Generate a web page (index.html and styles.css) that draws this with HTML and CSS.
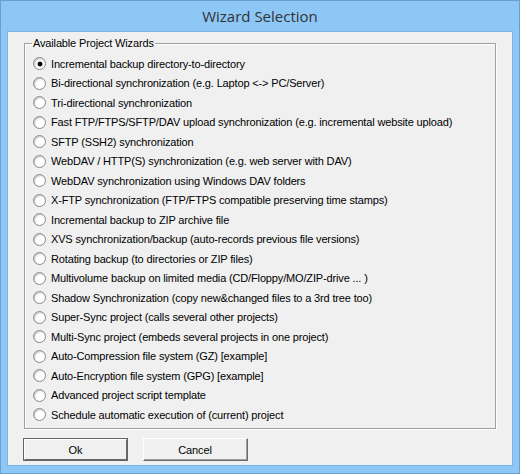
FILE: index.html
```html
<!DOCTYPE html>
<html>
<head>
<meta charset="utf-8">
<link rel="stylesheet" href="styles.css">
</head>
<body>
<div class="window">
  <div class="titlebar">Wizard Selection</div>
  <div class="client">
    <fieldset class="group">
      <legend class="legend">Available Project Wizards</legend>
      <div class="list">
        <label class="row"><span class="radio checked"></span>Incremental backup directory-to-directory</label>
        <label class="row"><span class="radio"></span>Bi-directional synchronization (e.g. Laptop &lt;-&gt; PC/Server)</label>
        <label class="row"><span class="radio"></span>Tri-directional synchronization</label>
        <label class="row"><span class="radio"></span>Fast FTP/FTPS/SFTP/DAV upload synchronization (e.g. incremental website upload)</label>
        <label class="row"><span class="radio"></span>SFTP (SSH2) synchronization</label>
        <label class="row"><span class="radio"></span>WebDAV / HTTP(S) synchronization (e.g. web server with DAV)</label>
        <label class="row"><span class="radio"></span>WebDAV synchronization using Windows DAV folders</label>
        <label class="row"><span class="radio"></span>X-FTP synchronization (FTP/FTPS compatible preserving time stamps)</label>
        <label class="row"><span class="radio"></span>Incremental backup to ZIP archive file</label>
        <label class="row"><span class="radio"></span>XVS synchronization/backup (auto-records previous file versions)</label>
        <label class="row"><span class="radio"></span>Rotating backup (to directories or ZIP files)</label>
        <label class="row"><span class="radio"></span>Multivolume backup on limited media (CD/Floppy/MO/ZIP-drive ... )</label>
        <label class="row"><span class="radio"></span>Shadow Synchronization (copy new&amp;changed files to a 3rd tree too)</label>
        <label class="row"><span class="radio"></span>Super-Sync project (calls several other projects)</label>
        <label class="row"><span class="radio"></span>Multi-Sync project (embeds several projects in one project)</label>
        <label class="row"><span class="radio"></span>Auto-Compression file system (GZ) [example]</label>
        <label class="row"><span class="radio"></span>Auto-Encryption file system (GPG) [example]</label>
        <label class="row"><span class="radio"></span>Advanced project script template</label>
        <label class="row"><span class="radio"></span>Schedule automatic execution of (current) project</label>
      </div>
    </fieldset>
    <div class="buttons">
      <button class="btn default"><span class="btn-inner">Ok</span></button>
      <button class="btn"><span class="btn-inner">Cancel</span></button>
    </div>
  </div>
</div>
</body>
</html>
```

FILE: styles.css
```css
html, body {
  margin: 0;
  padding: 0;
  background: #f0f0f0;
}

.window {
  width: 520px;
  height: 474px;
  box-sizing: border-box;
  border: 1px solid #6b9fd1;
  background: #8dc7f6;
  display: flex;
  flex-direction: column;
}

.titlebar {
  height: 29px;
  display: flex;
  align-items: center;
  justify-content: center;
  font-family: "Open Sans", "Noto Sans", sans-serif;
  font-size: 15px;
  color: #333333;
  padding-bottom: 1px;
}

.client {
  margin: 0 6px 7px 6px;
  border: 1px solid #7db2e4;
  background: #f0f0f0;
  flex: 1;
  display: flex;
  flex-direction: column;
  padding: 5px 16px 0 15px;
  font-family: "Liberation Sans", Arial, sans-serif;
  font-size: 11px;
  letter-spacing: -0.15px;
  color: #000;
}

.group {
  margin: 0 0 0 1px;
  padding: 0 0 0 8px;
  border: 1px solid #a0a0a0;
  box-shadow: 1px 1px 0 #ffffff, inset 1px 1px 0 #ffffff;
  height: 392px;
  box-sizing: border-box;
}

.legend {
  padding: 0 1px;
  margin-left: -1px;
  line-height: 13px;
}

.list {
  display: flex;
  flex-direction: column;
  padding-top: 4px;
}

.row {
  height: 19.5px;
  display: flex;
  align-items: center;
  white-space: nowrap;
}

.radio {
  width: 11px;
  height: 11px;
  border-radius: 50%;
  border: 1px solid #8a8a8a;
  background: radial-gradient(circle at 60% 60%, #ffffff 40%, #e4e4e4 100%);
  box-shadow: inset 1px 1px 1px #c8c8c8;
  margin-right: 5px;
  display: flex;
  align-items: center;
  justify-content: center;
  flex: none;
}

.radio.checked::after {
  content: "";
  width: 4px;
  height: 4px;
  border-radius: 50%;
  background: #000;
  box-shadow: 0 0 0 0.5px #333;
}

.buttons {
  display: flex;
  gap: 15px;
  margin-top: 9px;
}

.btn {
  width: 105px;
  height: 23px;
  padding: 0;
  margin: 0;
  background: #f0f0f0;
  font-family: "Liberation Sans", Arial, sans-serif;
  font-size: 11px;
  letter-spacing: -0.15px;
  color: #000;
  border: none;
  border-top: 1px solid #ffffff;
  border-left: 1px solid #ffffff;
  border-right: 1px solid #696969;
  border-bottom: 1px solid #696969;
  box-sizing: border-box;
  display: flex;
}

.btn-inner {
  flex: 1;
  display: flex;
  align-items: center;
  justify-content: center;
  border-right: 1px solid #a0a0a0;
  border-bottom: 1px solid #a0a0a0;
  padding-top: 1px;
}

.btn.default {
  border: 1px solid #646464;
}

.btn.default .btn-inner {
  border-top: 1px solid #ffffff;
  border-left: 1px solid #ffffff;
  border-right: 1px solid #696969;
  border-bottom: 1px solid #696969;
}
```
